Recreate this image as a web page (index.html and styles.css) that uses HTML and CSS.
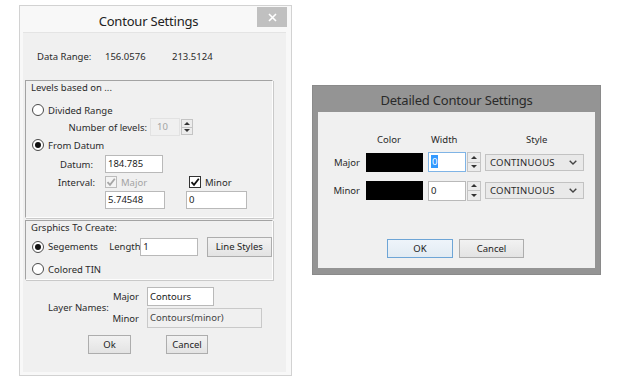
FILE: index.html
```html
<!DOCTYPE html>
<html lang="en">

<head>
    <meta charset="UTF-8">
    <title>Contour Settings</title>
    <link rel="stylesheet" href="styles.css">
</head>

<body>
    <div class="desk">
        <!-- Main dialog -->
        <div class="win win-main">
            <div class="titlebar">
                <span class="title">Contour Settings</span>
                <span class="close">
                    <svg width="9" height="9" viewBox="0 0 9 9"><path d="M1 1L8 8M8 1L1 8" stroke="#fff" stroke-width="1.6"/></svg>
                </span>
            </div>
            <div class="client client-main">
                <div class="range-row">
                    <span class="range-label">Data Range:</span>
                    <span class="range-min">156.0576</span>
                    <span>213.5124</span>
                </div>

                <div class="group group-levels">
                    <div class="legend">Levels based on ...</div>
                    <div class="opt opt-first"><span class="radio"></span>Divided Range</div>
                    <div class="levels-row">
                        <span class="levels-label">Number of levels:</span>
                        <span class="field field-dis levels-field">10</span>
                        <span class="spin spin-small"><span class="spin-up"><i></i></span><span class="spin-down"><i></i></span></span>
                    </div>
                    <div class="opt opt-datum"><span class="radio checked"></span>From Datum</div>
                    <div class="datum-row">
                        <span class="datum-label">Datum:</span>
                        <span class="field datum-field">184.785</span>
                    </div>
                    <div class="interval-row">
                        <span class="interval-label">Interval:</span>
                        <span class="check-wrap check-major">
                            <span class="check check-dis"><svg width="10" height="10" viewBox="0 0 10 10"><path d="M1.5 5.2L4 7.8L8.8 1.8" fill="none" stroke="#a6a6a6" stroke-width="1.8"/></svg></span>
                            <span class="dis-text">Major</span>
                        </span>
                        <span class="check-wrap">
                            <span class="check"><svg width="10" height="10" viewBox="0 0 10 10"><path d="M1.5 5.2L4 7.8L8.8 1.8" fill="none" stroke="#111" stroke-width="1.8"/></svg></span>
                            <span>Minor</span>
                        </span>
                    </div>
                    <div class="interval-fields">
                        <span class="field major-field">5.74548</span>
                        <span class="field minor-field">0</span>
                    </div>
                </div>

                <div class="group group-graphics">
                    <div class="legend">Grsphics To Create:</div>
                    <div class="seg-row">
                        <span class="opt-seg"><span class="radio checked"></span>Segements</span>
                        <span class="length-label">Length</span>
                        <span class="field length-field">1</span>
                        <span class="btn btn-styles">Line Styles</span>
                    </div>
                    <div class="opt opt-tin"><span class="radio"></span>Colored TIN</div>
                </div>

                <div class="layer-block">
                    <span class="layer-label">Layer Names:</span>
                    <div class="layer-rows">
                        <div class="layer-row">
                            <span class="layer-sub">Major</span>
                            <span class="field layer-major">Contours</span>
                        </div>
                        <div class="layer-row layer-row-minor">
                            <span class="layer-sub">Minor</span>
                            <span class="field field-ro layer-minor">Contours(minor)</span>
                        </div>
                    </div>
                </div>

                <div class="main-buttons">
                    <span class="btn btn-ok">Ok</span>
                    <span class="btn btn-cancel">Cancel</span>
                </div>
            </div>
        </div>

        <!-- Detailed dialog -->
        <div class="win win-detail">
            <div class="titlebar titlebar-detail">
                <span class="title">Detailed Contour Settings</span>
            </div>
            <div class="client client-detail">
                <div class="d-row d-head">
                    <span class="d-label"></span>
                    <span class="d-color">Color</span>
                    <span class="d-width">Width</span>
                    <span class="d-style">Style</span>
                </div>
                <div class="d-row d-major">
                    <span class="d-label">Major</span>
                    <span class="d-color"><span class="swatch"></span></span>
                    <span class="d-width">
                        <span class="field width-field focus"><span class="sel">0</span></span>
                        <span class="spin"><span class="spin-up"><i></i></span><span class="spin-down"><i></i></span></span>
                    </span>
                    <span class="combo">CONTINUOUS
                        <svg width="8" height="5" viewBox="0 0 8 5"><path d="M0.7 0.7L4 4L7.3 0.7" fill="none" stroke="#444" stroke-width="1.4"/></svg>
                    </span>
                </div>
                <div class="d-row d-minor">
                    <span class="d-label">Minor</span>
                    <span class="d-color"><span class="swatch"></span></span>
                    <span class="d-width">
                        <span class="field width-field">0</span>
                        <span class="spin"><span class="spin-up"><i></i></span><span class="spin-down"><i></i></span></span>
                    </span>
                    <span class="combo">CONTINUOUS
                        <svg width="8" height="5" viewBox="0 0 8 5"><path d="M0.7 0.7L4 4L7.3 0.7" fill="none" stroke="#444" stroke-width="1.4"/></svg>
                    </span>
                </div>
                <div class="detail-buttons">
                    <span class="btn btn-default">OK</span>
                    <span class="btn btn-dcancel">Cancel</span>
                </div>
            </div>
        </div>
    </div>
</body>

</html>
```

FILE: styles.css
```css
body {
    margin: 0;
    background: #fff;
    font-family: 'Noto Sans', 'Segoe UI', sans-serif;
    font-size: 9.5px;
    color: #2a2a2a;
}

.desk {
    display: flex;
    align-items: flex-start;
    padding: 5px 0 0 19px;
}

/* Window frames */
.win {
    box-sizing: border-box;
    display: flex;
    flex-direction: column;
}

.win-main {
    width: 273px;
    height: 371px;
    border: 1px solid #d2d2d2;
    background: #f8f8f8;
}

.titlebar {
    height: 26px;
    display: flex;
    align-items: flex-start;
    flex-shrink: 0;
}

.title {
    flex: 1;
    text-align: center;
    font-size: 13px;
    letter-spacing: -0.2px;
    line-height: 30px;
    color: #222;
    padding-left: 20px;
}

.close {
    width: 30px;
    height: 20px;
    margin: 1px 4px 0 0;
    background: #c0c0c0;
    display: flex;
    align-items: center;
    justify-content: center;
}

.client {
    flex: 1;
    background: #f0f0f0;
}

.client-main {
    margin: 0 5px 3px 3px;
    padding-top: 18px;
    border-top: 1px solid #e4e4e4;
    box-sizing: border-box;
}

/* Data range */
.range-row {
    display: flex;
    height: 14px;
    line-height: 14px;
    padding-left: 14px;
    margin-top: -1px;
}

.range-label {
    width: 68px;
}

.range-min {
    width: 67px;
}

/* Group boxes */
.group {
    box-sizing: border-box;
    width: 248px;
    margin-left: 2px;
    border: 1px solid;
    border-color: #a3a3a3 #fdfdfd #fdfdfd #a3a3a3;
    box-shadow: 1px 1px 0 #c9c9c9;
}

.group-levels {
    margin-top: 16px;
    padding-bottom: 8px;
}

.group-graphics {
    margin-top: 2px;
    padding-bottom: 2px;
}

.legend {
    height: 14px;
    line-height: 14px;
    padding-left: 5px;
}

.opt {
    display: flex;
    align-items: center;
    height: 16px;
    padding-left: 6px;
}

.opt-first {
    margin-top: 7px;
}

.opt-datum {
    margin-top: 1px;
}

.opt-tin {
    margin-top: 5px;
}

.radio {
    box-sizing: border-box;
    width: 12px;
    height: 12px;
    border: 1px solid #4a4a4a;
    border-radius: 50%;
    background: #fff;
    margin-right: 4px;
    display: flex;
    align-items: center;
    justify-content: center;
    flex-shrink: 0;
}

.radio.checked::after {
    content: '';
    width: 6px;
    height: 6px;
    border-radius: 50%;
    background: #111;
}

/* Edit fields */
.field {
    box-sizing: border-box;
    display: flex;
    align-items: center;
    height: 18px;
    padding: 0 0 1px 2px;
    background: #fff;
    border: 1px solid #b9b9b9;
    color: #222;
    white-space: nowrap;
}

.field-dis {
    background: #f0f0f0;
    border-color: #e2e2e2;
    color: #a3a3a3;
}

.field-ro {
    background: #f0f0f0;
    border-color: #c9c9c9;
    color: #444;
}

.levels-row {
    display: flex;
    align-items: center;
    height: 18px;
}

.levels-label {
    width: 121px;
    text-align: right;
    margin-right: 3px;
}

.levels-field {
    width: 30px;
    padding-left: 6px;
}

/* Spinner */
.spin {
    box-sizing: border-box;
    display: flex;
    flex-direction: column;
    width: 14px;
    height: 20px;
    margin-left: 1px;
    border: 1px solid #c4c4c4;
    background: #ececec;
}

.spin-small {
    width: 12px;
    height: 16px;
}

.spin-up,
.spin-down {
    flex: 1;
    display: flex;
    align-items: center;
    justify-content: center;
}

.spin-up {
    border-bottom: 1px solid #c4c4c4;
}

.spin-up i {
    border-left: 3px solid transparent;
    border-right: 3px solid transparent;
    border-bottom: 3px solid #333;
}

.spin-down i {
    border-left: 3px solid transparent;
    border-right: 3px solid transparent;
    border-top: 3px solid #333;
}

.datum-row {
    display: flex;
    align-items: center;
    height: 18px;
    margin-top: 2px;
    padding-left: 34px;
}

.datum-label {
    width: 45px;
}

.datum-field {
    width: 58px;
}

.interval-row {
    display: flex;
    align-items: center;
    height: 16px;
    margin-top: 1px;
    padding-left: 32px;
}

.interval-label {
    width: 47px;
}

.check-wrap {
    display: flex;
    align-items: center;
}

.check-major {
    width: 84px;
}

.check {
    box-sizing: border-box;
    width: 12px;
    height: 12px;
    border: 1px solid #333;
    background: #fff;
    margin-right: 4px;
    display: flex;
    align-items: center;
    justify-content: center;
}

.check-dis {
    border-color: #bcbcbc;
    background: #f4f4f4;
}

.dis-text {
    color: #a3a3a3;
}

.interval-fields {
    display: flex;
    margin-top: 1px;
    padding-left: 79px;
}

.major-field {
    width: 60px;
}

.minor-field {
    width: 61px;
    margin-left: 21px;
}

/* Graphics group */
.seg-row {
    display: flex;
    align-items: center;
    height: 19px;
    margin-top: 2px;
    padding-left: 6px;
}

.opt-seg {
    display: flex;
    align-items: center;
    width: 78px;
}

.length-label {
    width: 31px;
}

.length-field {
    width: 58px;
}

.btn {
    box-sizing: border-box;
    display: flex;
    align-items: center;
    justify-content: center;
    height: 19px;
    border: 1px solid #adadad;
    background: linear-gradient(#f2f2f2, #e3e3e3);
    color: #222;
}

.btn-styles {
    width: 66px;
    height: 20px;
    margin-left: 9px;
}

/* Layer names */
.layer-block {
    display: flex;
    align-items: center;
    margin-top: 7px;
    padding-left: 25px;
}

.layer-label {
    width: 59px;
    white-space: nowrap;
}

.layer-row {
    display: flex;
    align-items: center;
    height: 19px;
}

.layer-row-minor {
    height: 20px;
    margin-top: 2px;
}

.layer-sub {
    width: 32px;
    text-align: right;
    margin-right: 8px;
}

.layer-major {
    width: 67px;
    height: 19px;
}

.layer-minor {
    width: 115px;
    height: 20px;
}

.main-buttons {
    display: flex;
    margin-top: 7px;
    padding-left: 65px;
}

.btn-ok {
    width: 43px;
}

.btn-cancel {
    width: 42px;
    margin-left: 35px;
}

/* Detailed dialog */
.win-detail {
    width: 289px;
    height: 190px;
    margin: 80px 0 0 20px;
    border: 1px solid #8a8a8a;
    background: #949494;
}

.titlebar-detail .title {
    padding-left: 0;
    line-height: 29px;
    color: #2a2a2a;
}

.client-detail {
    margin: 0 5px 6px 5px;
    padding-top: 20px;
}

.d-row {
    display: flex;
    align-items: center;
}

.d-head {
    height: 14px;
}

.d-major {
    height: 20px;
    margin-top: 6px;
}

.d-minor {
    height: 21px;
    margin-top: 8px;
}

.d-label {
    width: 42px;
    padding-right: 6px;
    text-align: right;
}

.d-color {
    width: 62px;
    display: flex;
}

.d-width {
    width: 57px;
    display: flex;
    align-items: center;
}

.d-head .d-color {
    padding-left: 11px;
    width: 51px;
}

.d-head .d-width {
    padding-left: 3px;
    width: 54px;
}

.d-style {
    padding-left: 41px;
}

.swatch {
    width: 57px;
    height: 19px;
    background: #000;
}

.width-field {
    width: 38px;
    height: 20px;
    align-items: flex-start;
    padding-top: 2px;
}

.width-field.focus {
    border-color: #7fb4e6;
}

.sel {
    background: #3399ff;
    color: #fff;
    padding: 0 1px;
    line-height: 13px;
}

.combo {
    box-sizing: border-box;
    width: 99px;
    height: 17px;
    display: flex;
    align-items: center;
    justify-content: space-between;
    padding: 0 6px 0 4px;
    border: 1px solid #c2c2c2;
    background: #e9e9e9;
    letter-spacing: 0.2px;
}

.detail-buttons {
    display: flex;
    margin-top: 38px;
    padding-left: 69px;
}

.btn-default {
    width: 66px;
    border-color: #6ea5d6;
    background: linear-gradient(#eef4fa, #e2ebf3);
}

.btn-dcancel {
    width: 65px;
    margin-left: 6px;
}
```
